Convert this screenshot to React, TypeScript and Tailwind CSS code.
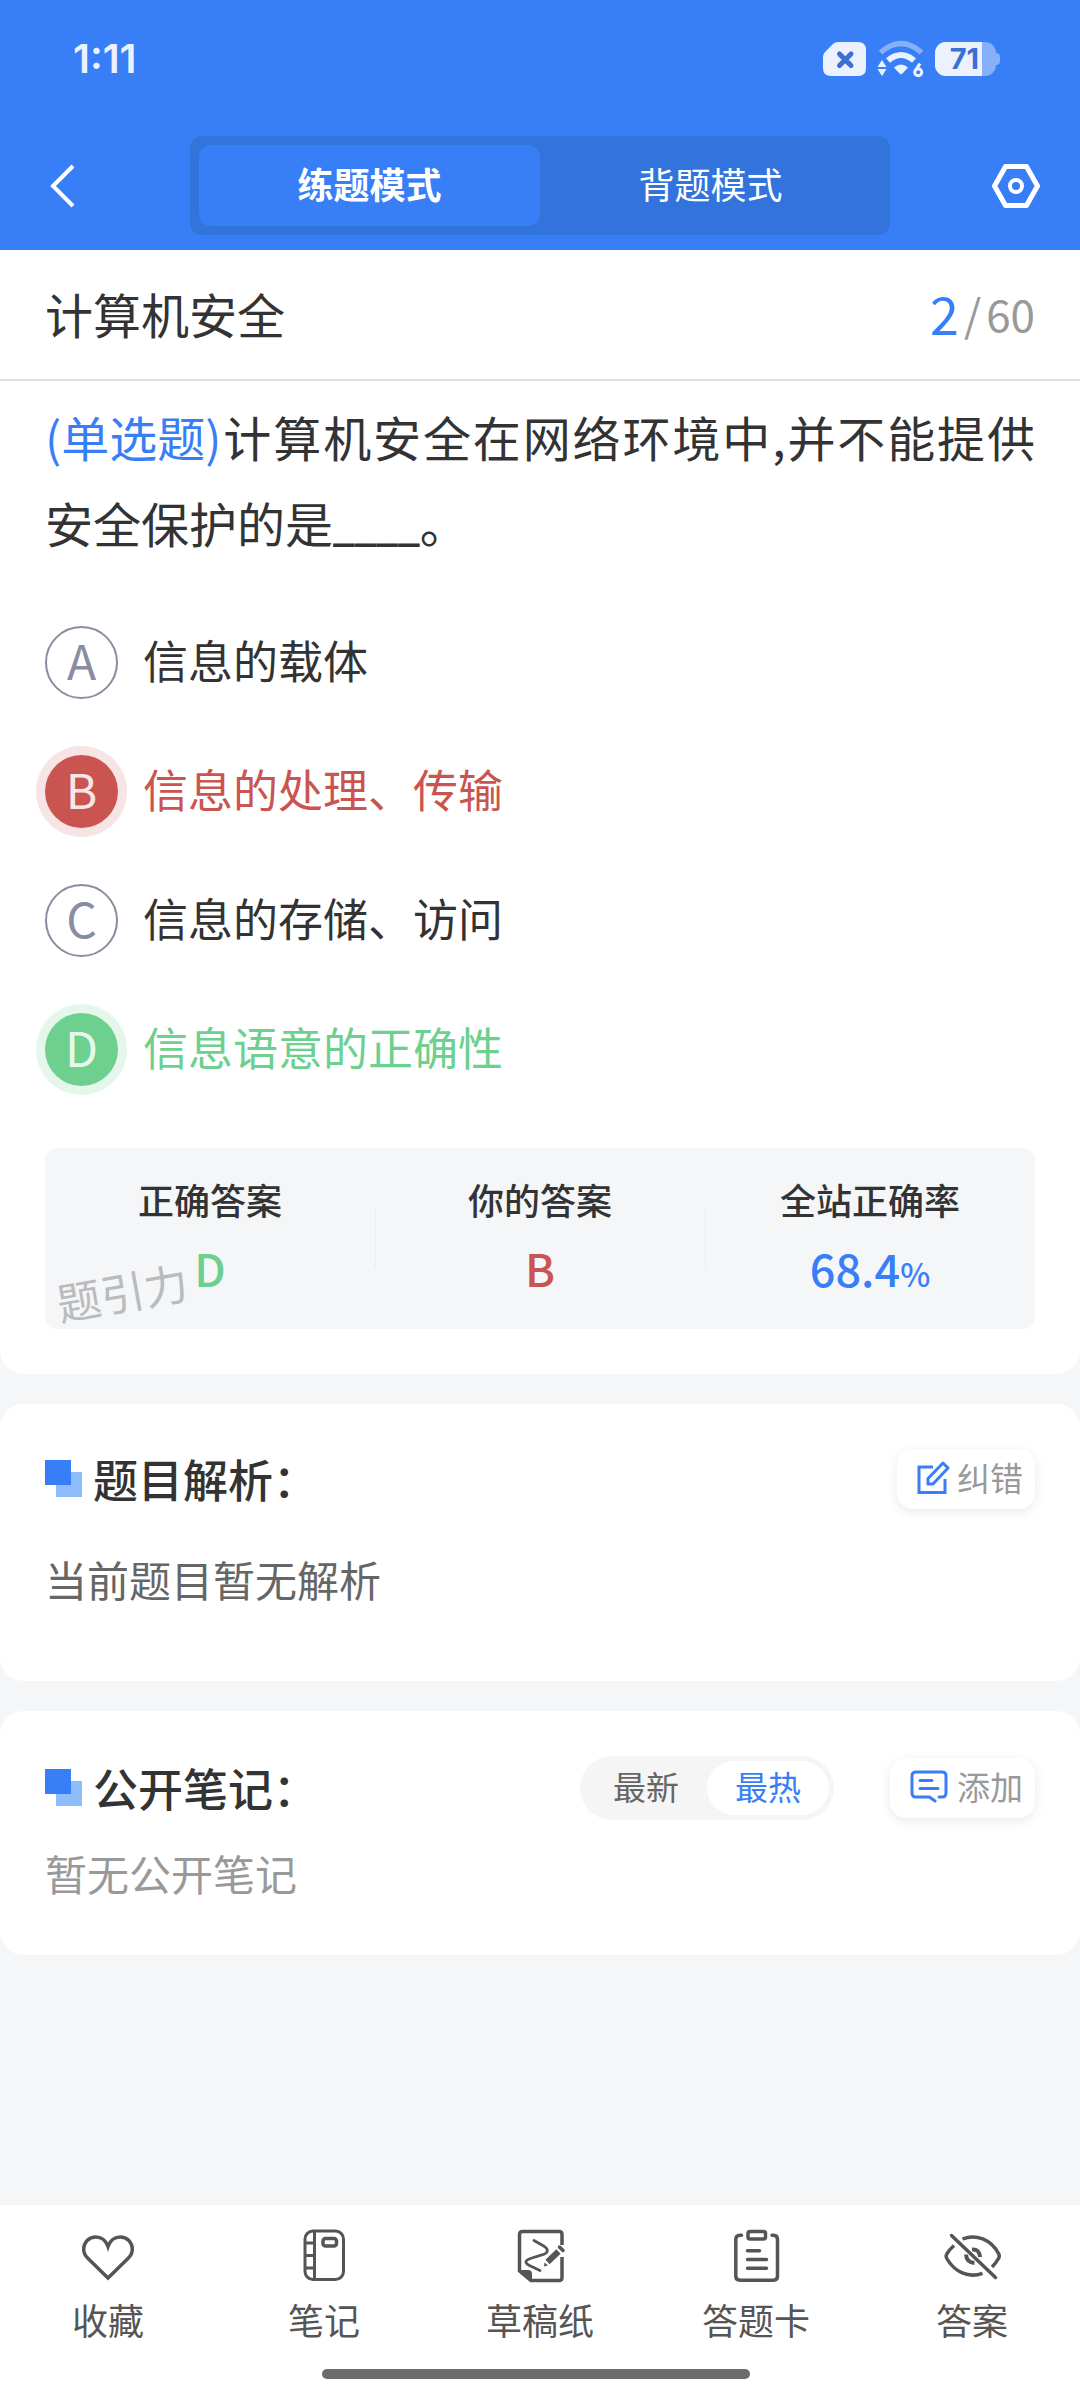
import { useState, type ReactNode } from 'react';

type Option = { key: string; text: string };

const options: Option[] = [
  { key: 'A', text: '信息的载体' },
  { key: 'B', text: '信息的处理、传输' },
  { key: 'C', text: '信息的存储、访问' },
  { key: 'D', text: '信息语意的正确性' },
];

const correctKey = 'D';

function StatusBar() {
  return (
    <div className="flex h-[38px] items-center justify-between pl-[73px] pr-20">
      <span className="font-['Inter',sans-serif] text-[40px] font-semibold leading-[38px] text-[#ebf2fe]">1:11</span>
      <div className="flex items-center gap-[11px]">
        <svg width="43" height="34" viewBox="0 0 43 34" aria-hidden="true">
          <path d="M15 0H35Q43 0 43 8V26Q43 34 35 34H8Q0 34 0 26V15Q0 12 2 10L10 2Q12 0 15 0Z" fill="#ebf2fe" />
          <path d="M16.500 12L28 23.500M28 12L16.500 23.500" stroke="#3a6fd4" strokeWidth="5" strokeLinecap="round" />
        </svg>
        <svg width="47" height="38" viewBox="0 0 47 38" fill="none" aria-hidden="true">
          <path d="M3.500 12.500Q24 -5.500 44.500 12.500" stroke="#86b1fa" strokeWidth="5.500" />
          <path d="M11 20.500Q24 9.500 37 20.500" stroke="#ebf2fe" strokeWidth="6" />
          <path d="M17 27.500Q24 21.500 31 27.500L25.500 33.500Q24 35 22.500 33.500Z" fill="#ebf2fe" />
          <path d="M5 20L9.500 27H0.500ZM5 36L9.500 29H0.500Z" fill="#ebf2fe" />
          <path d="M43 23.500L38.500 30.500" stroke="#ebf2fe" strokeWidth="3.200" />
          <circle cx="41.200" cy="32.300" r="3.500" stroke="#ebf2fe" strokeWidth="3" />
        </svg>
        <div className="flex items-center">
          <div className="flex h-[34px] w-[61px] overflow-hidden rounded-[11px] bg-[#86b1fa]">
            <span className="w-[47px] bg-[#ebf2fe] pr-[3px] text-right font-['Inter',sans-serif] text-[29px] font-bold leading-[34px] text-[#3a6fd4]">
              71
            </span>
          </div>
          <div className="h-3 w-1 rounded-r bg-[#86b1fa]" />
        </div>
      </div>
    </div>
  );
}

function Header() {
  const [mode, setMode] = useState('练题模式');

  return (
    <header className="bg-[#387ff7] pb-[15px] pt-10 text-white">
      <StatusBar />
      <div className="mt-[58px] flex items-center justify-between px-10">
        <button type="button" aria-label="返回">
          <svg width="48" height="44" viewBox="0 0 48 44" fill="none" stroke="currentColor" strokeWidth="4">
            <path d="M33 2L13 22L33 42" />
          </svg>
        </button>
        <div className="grid w-[70%] grid-cols-2 rounded-xl bg-[#3273dc] p-[9px]">
          {['练题模式', '背题模式'].map((item) => (
            <button
              key={item}
              type="button"
              aria-pressed={mode === item}
              onClick={() => setMode(item)}
              className={`rounded-xl pb-1 text-4xl leading-[77px] ${mode === item ? 'bg-[#387ff7] font-bold' : ''}`}
            >
              {item}
            </button>
          ))}
        </div>
        <button type="button" aria-label="设置">
          <svg width="48" height="44" viewBox="0 0 48 44" fill="none" stroke="currentColor" strokeWidth="5" strokeLinejoin="round">
            <path d="M13.500 2.500H34.500L45.500 22L34.500 41.500H13.500L2.500 22Z" />
            <circle cx="24" cy="22" r="6" strokeWidth="4" />
          </svg>
        </button>
      </div>
    </header>
  );
}

function OptionRow({ option, checked, onPick }: { option: Option; checked: boolean; onPick: () => void }) {
  let circle = 'border-2 border-[#8a8d9f] text-[#8a8d9f]';
  let label = 'text-[#333]';
  if (option.key === correctKey) {
    circle = 'bg-[#6dd08f] text-[#e6f8ec] ring-9 ring-[#e4f7ea]';
    label = 'text-[#6dd08f]';
  } else if (checked) {
    circle = 'bg-[#ca544f] text-[#f9e6e6] ring-9 ring-[#f7e4e4]';
    label = 'text-[#ca544f]';
  }

  return (
    <label className="relative flex cursor-pointer items-center gap-[25px]">
      <input type="radio" name="answer" value={option.key} checked={checked} onChange={onPick} className="sr-only" />
      <span className={`flex size-[73px] items-center justify-center rounded-full pb-2 text-5xl leading-[60px] ${circle}`}>
        {option.key}
      </span>
      <span className={`pb-[6px] text-[45px] leading-[60px] ${label}`}>{option.text}</span>
    </label>
  );
}

function Stat({ title, children }: { title: string; children: ReactNode }) {
  return (
    <div className="flex flex-col items-center gap-5">
      <p className="text-4xl font-medium leading-[48px] text-[#333]">{title}</p>
      <p className="text-[45px] font-medium leading-[50px]">{children}</p>
    </div>
  );
}

function SectionTitle({ children }: { children: ReactNode }) {
  return (
    <h2 className="flex items-center gap-[10px] text-[45px] font-medium leading-[60px] text-[#333]">
      <svg width="38" height="38" viewBox="0 0 38 38" aria-hidden="true">
        <rect x="11" y="12" width="26" height="25" fill="#8fbcfa" />
        <rect width="26" height="25" fill="#387ff7" />
      </svg>
      {children}
    </h2>
  );
}

function ActionButton({ icon, children }: { icon: ReactNode; children: ReactNode }) {
  return (
    <button
      type="button"
      className="flex items-center gap-[7px] rounded-2xl bg-white pb-1 pl-5 pr-3 text-[33px] leading-[56px] text-[#999] shadow-[0_3px_12px_rgba(0,0,0,0.09)]"
    >
      {icon}
      {children}
    </button>
  );
}

function NavIcon({ children }: { children: ReactNode }) {
  return (
    <svg width="60" height="60" viewBox="0 0 60 60" fill="none" stroke="currentColor" strokeWidth="3.500" aria-hidden="true">
      {children}
    </svg>
  );
}

const navItems = [
  {
    label: '收藏',
    icon: (
      <path d="M30 53L9.800 33.200C6.500 30 5.700 27.300 5.700 24.500C5.700 17.300 11 12 17.700 12C23 12 28 15.500 30 21.500C32 15.500 37 12 42.300 12C49 12 54.300 17.300 54.300 24.500C54.300 27.300 53.500 30 50.200 33.200Z" />
    ),
  },
  {
    label: '笔记',
    icon: (
      <>
        <rect x="11" y="6" width="38.500" height="48.500" rx="8" strokeWidth="3" />
        <path d="M20.500 6V54.500M11 18H20.500M11 30.500H20.500M11 43H20.500" strokeWidth="3" />
        <rect x="29" y="13.500" width="13.500" height="7.500" rx="2.500" />
      </>
    ),
  },
  {
    label: '草稿纸',
    icon: (
      <>
        <path d="M52 20V9.500Q52 6.500 49 6.500H12.500Q9.500 6.500 9.500 9.500V46L21 55.500H49Q52 55.500 52 52.500V32" />
        <path d="M8.500 45H18Q22 45 22 49V57Z" fill="currentColor" stroke="none" />
        <path d="M24 15.500L32 20C39.500 24 39 28 31 30.200L22 33C14 35.500 14.500 38 20 40.800L30 45.500" strokeWidth="2.800" strokeLinecap="round" />
        <path d="M37.500 37L48.500 26.500" strokeWidth="6" />
        <path d="M49.500 22L53 25.500" strokeWidth="3.500" strokeLinecap="round" />
        <path d="M34.500 37.500L34 41.500L38 40.500Z" fill="currentColor" stroke="none" />
      </>
    ),
  },
  {
    label: '答题卡',
    icon: (
      <>
        <path d="M15.500 10.200H14Q9.800 10.200 9.800 14.500V51Q9.800 55.200 14 55.200H47.500Q51.500 55.200 51.500 51V14.500Q51.500 10.200 47.500 10.200H46" strokeLinecap="round" />
        <rect x="22" y="6.500" width="17.500" height="7.500" rx="2" />
        <path d="M21.500 25.700H33.500M21.500 34.500H40.500M21.500 43.300H40.500" strokeLinecap="round" />
      </>
    ),
  },
  {
    label: '答案',
    icon: (
      <>
        <path d="M9.500 10.500L53.500 52.500" strokeLinecap="round" />
        <path d="M20.500 14C34 8.500 49 14.500 56.500 28.500Q58 31 56.500 33.500Q54 38 50 42" />
        <path d="M12 20.500Q7.500 24.500 4.800 29Q3.500 31 4.800 33.500C12.500 47 26.500 53.500 40.500 48.300" />
        <path d="M30 24.500Q37.500 24 38 32M24 29.500Q24.500 37.500 32.500 38" strokeWidth="4" />
      </>
    ),
  },
];

export default function App() {
  const [answer, setAnswer] = useState('B');
  const [sort, setSort] = useState('最热');

  return (
    <div className="flex min-h-screen flex-col bg-[#f4f6f8] font-['Noto_Sans_CJK_SC',sans-serif]">
      <Header />

      <main className="flex flex-col gap-[30px]">
        <section className="rounded-b-3xl bg-white pb-[45px]">
          <div className="flex items-center justify-between border-b-2 border-[#dfe0e2] px-[45px] pb-[30px] pt-[27px]">
            <h1 className="text-5xl leading-[72px] text-[#333]">计算机安全</h1>
            <p className="flex items-center gap-[5px] text-[44px] leading-[72px] text-[#999]">
              <span className="text-[52px] text-[#387ff7]">2</span>
              <span>/</span>
              <span>60</span>
            </p>
          </div>

          <div className="px-[45px] pt-3">
            <p className="text-justify text-5xl leading-[86px] text-[#333]">
              <span className="inline-block text-[#387ff7]">(单选题)</span>
              计算机安全在网络环境中,并不能提供安全保护的是
              <span className="font-['Roboto',sans-serif]">____</span>。
            </p>

            <div role="radiogroup" aria-label="选项" className="mt-14 flex flex-col gap-14">
              {options.map((option) => (
                <OptionRow
                  key={option.key}
                  option={option}
                  checked={answer === option.key}
                  onPick={() => setAnswer(option.key)}
                />
              ))}
            </div>

            <div className="relative mt-[62px] grid grid-cols-3 rounded-xl bg-[#f4f6f8] pb-9 pt-[27px]">
              <Stat title="正确答案">
                <span className="text-[#6dd08f]">{correctKey}</span>
              </Stat>
              <Stat title="你的答案">
                <span className="text-[#ca544f]">{answer}</span>
              </Stat>
              <Stat title="全站正确率">
                <span className="text-[#387ff7]">
                  68.4<span className="text-[32px] leading-none">%</span>
                </span>
              </Stat>
              <span className="absolute left-1/3 top-[60px] h-[60px] w-px bg-[#eaecee]" />
              <span className="absolute left-2/3 top-[60px] h-[60px] w-px bg-[#eaecee]" />
              <span className="absolute bottom-2 left-[11px] -rotate-10 text-[44px] leading-[60px] text-[#b9bbbd]">题引力</span>
            </div>
          </div>
        </section>

        <section className="rounded-3xl bg-white px-[45px] pb-[72px] pt-[45px]">
          <div className="flex items-center justify-between">
            <SectionTitle>题目解析：</SectionTitle>
            <ActionButton
              icon={
                <svg width="33" height="33" viewBox="0 0 33 33" fill="none" stroke="#387ff7" strokeWidth="3" aria-hidden="true">
                  <path d="M16 6H2V31.500H28V18" />
                  <path d="M11 23V17.500L26 2L31 7L16 23Z" strokeLinejoin="round" />
                </svg>
              }
            >
              纠错
            </ActionButton>
          </div>
          <p className="mt-10 text-[42px] leading-[60px] text-[#666]">当前题目暂无解析</p>
        </section>

        <section className="rounded-3xl bg-white px-[45px] pb-[52px] pt-[45px]">
          <div className="flex items-center">
            <SectionTitle>公开笔记：</SectionTitle>
            <div className="ml-auto flex rounded-full bg-[#f5f5f5] p-[5px]">
              {['最新', '最热'].map((item) => (
                <button
                  key={item}
                  type="button"
                  aria-pressed={sort === item}
                  onClick={() => setSort(item)}
                  className={`rounded-full px-7 pb-1 text-[33px] leading-[50px] ${
                    sort === item ? 'bg-white text-[#387ff7]' : 'text-[#666]'
                  }`}
                >
                  {item}
                </button>
              ))}
            </div>
            <div className="ml-14">
              <ActionButton
                icon={
                  <svg width="40" height="33" viewBox="0 0 40 33" fill="none" stroke="#387ff7" strokeWidth="3" strokeLinecap="round" aria-hidden="true">
                    <path d="M29 27H32Q36 27 36 23V6Q36 2 32 2H6Q2 2 2 6V23Q2 27 6 27H19.500L25 31" />
                    <path d="M10 10.500H22M10 18.500H28" />
                  </svg>
                }
              >
                添加
              </ActionButton>
            </div>
          </div>
          <p className="mt-[23px] text-[42px] leading-[60px] text-[#999]">暂无公开笔记</p>
        </section>
      </main>

      <footer className="mt-auto bg-white pb-[21px] pt-5 text-[#555]">
        <nav className="grid grid-cols-5">
          {navItems.map((item) => (
            <button key={item.label} type="button" className="flex flex-col items-center gap-[10px]">
              <NavIcon>{item.icon}</NavIcon>
              <span className="text-4xl leading-[48px]">{item.label}</span>
            </button>
          ))}
        </nav>
        <div className="mt-[26px] flex justify-center pr-2">
          <div className="h-[10px] w-[428px] rounded-full bg-[#6b6b6b]" />
        </div>
      </footer>
    </div>
  );
}
